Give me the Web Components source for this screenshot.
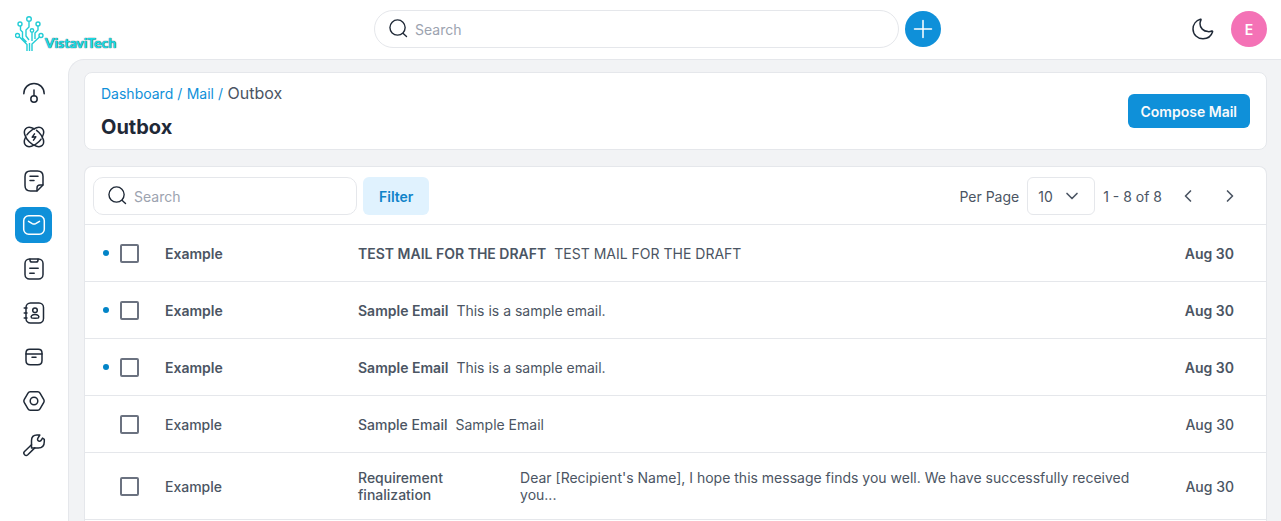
<!DOCTYPE html>
<html lang="en">
<head>
<meta charset="utf-8">
<meta name="viewport" content="width=device-width, initial-scale=1">
<title>Outbox</title>
<style>
  html, body { margin: 0; height: 100%; }
  body {
    --brand: #0f90d9; --line: #e5e7eb; --ink: #1f2937; --text: #4b5563; --soft: #f2f3f5;
    font-family: Inter, "Liberation Sans", sans-serif; font-size: 14px; color: var(--text); background: #fff;
  }
</style>
</head>
<body>
<app-shell>
  <top-bar slot="header"></top-bar>
  <side-nav slot="nav"></side-nav>
  <page-header heading="Outbox">
    <action-button slot="action">Compose Mail</action-button>
  </page-header>
  <ui-card grow>
    <list-toolbar></list-toolbar>
    <mail-list></mail-list>
  </ui-card>
</app-shell>

<script>
const ICONS = {
  search: '<circle cx="11.5" cy="11.5" r="8.3"/><path d="m17.7 17.9 3.6 3.4"/>',
  plus: '<path d="M12 3.500v17M3.500 12h17"/>',
  moon: '<path d="M9.4 2.2C5 3.5 2 7.4 2 12c0 5.5 4.500 9.800 10 9.800 4.500 0 8.300-2.800 9.600-7 .2-.7-.3-1-.9-.8-1.100.5-2.400.7-3.700.6C12.300 14.300 9 10.900 9 6.700c0-1.200.3-2.300.8-3.300.4-.8.300-1.400-.4-1.200Z"/>',
  down: '<path d="m6 9 6 6 6-6"/>',
  left: '<path d="m15 6-6 6 6 6"/>',
  right: '<path d="m9 6 6 6-6 6"/>',
  gauge: '<path d="M1.800 12.800C1.800 6.800 6.300 2.500 12 2.500s10.200 4.300 10.200 10.300"/><circle cx="12" cy="18" r="3.200"/><path d="M12 14.800V9"/>',
  atom: '<ellipse cx="12" cy="12" rx="11.800" ry="6.800" transform="rotate(45 12 12)" pathLength="100" stroke-dasharray="66 4 30"/><ellipse cx="12" cy="12" rx="11.800" ry="6.800" transform="rotate(-45 12 12)" pathLength="100" stroke-dasharray="15 4 46 4 31"/><path d="m12.500 8.800-2.300 3.400 3.600-.4-2.300 3.400"/>',
  note: '<path d="M15 22H8.500C4.800 22 3 20.200 3 16.500V7.500C3 3.800 4.800 2 8.500 2h7C19.200 2 21 3.800 21 7.500V16l-6 6Z"/><path d="M15 21.800V19c0-2.200.8-3 3-3h2.800M8 7.300h8M8 11.500h4"/>',
  mail: '<rect x="1.700" y="2.700" width="20.600" height="18.600" rx="5"/><path d="m6.500 8.300 3.800 2.300c1.100.6 2.300.6 3.400 0l3.800-2.300"/>',
  clip: '<rect x="3" y="2" width="18" height="20" rx="4.500"/><path d="M8 2.200v1c0 1.200.7 1.800 2 1.800h4c1.300 0 2-.6 2-1.800v-1M7.800 11.300h8.400M7.800 16.300h4.400"/>',
  contacts: '<rect x="4" y="2" width="17.500" height="20" rx="4.500"/><path d="M2.200 7H5M2.200 12H5M2.200 17H5"/><circle cx="13" cy="9.300" r="2.300"/><path d="M9.500 16.800c-1.300-1.600 1-3.300 3.500-3.300s4.800 1.700 3.500 3.300c-.8.500-6.200.5-7 0Z"/>',
  archive: '<path d="M4 9v6.500c0 3 1.300 4.300 4.300 4.300h7.400c3 0 4.300-1.300 4.300-4.300V9"/><path d="M4 9V8c0-2.500 1.300-3.700 3.700-3.700h8.600C18.700 4.300 20 5.500 20 8v1ZM10 12.200h4"/>',
  hex: '<path d="M8.200 2.800h7.600c1 0 1.700.4 2.200 1.300l3.800 6.500c.5.900.5 1.900 0 2.800L18 19.900c-.5.900-1.200 1.300-2.200 1.300H8.200c-1 0-1.700-.4-2.200-1.300l-3.800-6.500c-.5-.9-.5-1.900 0-2.800L6 4.100c.5-.9 1.200-1.300 2.200-1.300Z"/><circle cx="12" cy="12" r="3.800"/>',
  wrench: '<path d="m9.500 11.800-7 6.700c-2 2.200 1.100 5.300 3.300 3.300l7-6.900"/><path d="M13 15H9.500V7.500C9.500 4 11.700 2 15 2h2.800l-2 3.300c-.7 1.200 0 2.700 1.500 2.900 1.200.2 1.800-.5 2.300-1.500l.9-1.600 1.800 1.300v2.100c0 4.200-2.200 6.500-6 6.500Z"/>'
};
const icon = (name, size = 24, width = 1.5) =>
  `<svg width="${size}" height="${size}" viewBox="0 0 24 24" fill="none" stroke="currentColor" stroke-width="${width}" stroke-linecap="round" stroke-linejoin="round" aria-hidden="true">${ICONS[name]}</svg>`;

const BASE = `<style>
  * { box-sizing: border-box; } :host { display: block; box-sizing: border-box; } :host([hidden]) { display: none; }
  svg { display: block; flex: none; } a { text-decoration: none; }
  button, input, select { font: inherit; color: inherit; margin: 0; } button { border: 0; padding: 0; background: none; cursor: pointer; }
</style>`;

class BaseElement extends HTMLElement {
  connectedCallback() {
    if (this.shadowRoot) return;
    this.attachShadow({ mode: 'open' }).innerHTML = BASE + this.render();
  }
}

customElements.define('app-shell', class extends BaseElement {
  render() { return `<style>
    :host { display: grid; grid-template: auto minmax(0, 1fr) / 68px minmax(0, 1fr); height: 100vh; overflow: hidden; }
    header { grid-column: 1 / -1; }
    main { display: flex; flex-direction: column; gap: 16px; padding: 12px 14px 0 15px; background: var(--soft);
      border: solid var(--line); border-width: 1px 0 0 1px; border-top-left-radius: 16px; overflow: hidden; }
  </style><header><slot name="header"></slot></header><slot name="nav"></slot><main><slot></slot></main>`; }
});

customElements.define('brand-logo', class extends BaseElement {
  render() { return `<style>
    :host { width: 109px; padding-top: 8px; }
    a { display: flex; align-items: flex-end; height: 38px; color: #23cdd6; }
    span { font: 700 14px/18px Lato, sans-serif; color: #17dce6; text-shadow: 0 0 1px #34606a, 0 0 1px #34606a; white-space: nowrap; }
    svg { margin-right: 1px; }
  </style><a href="#" aria-label="VistaviTech home">
    <svg width="29" height="38" viewBox="0 0 29 38" fill="none" stroke="currentColor" stroke-width="1.400" aria-hidden="true">
      <circle cx="14" cy="5" r="2.300"/><circle cx="5" cy="10" r="2"/><circle cx="23" cy="10" r="2"/><circle cx="17" cy="16.500" r="1.700"/><circle cx="2.500" cy="21.500" r="2"/><circle cx="26" cy="21.500" r="2"/>
      <path d="M14 7.500V13l-3 3v6l3 4M5.500 12v4l2 2v6l4 4M23 12v4l-3 3v6M17 18.500V27M4.500 23l7.500 7.500V37M24.500 23 17 30v7M14.500 29v8"/>
    </svg><span>VistaviTech</span></a>`; }
});

customElements.define('search-field', class extends BaseElement {
  render() { return `<style>
    label { display: flex; align-items: center; gap: 6px; height: 38px; padding: 0 12px; background: #fff;
      border: 1px solid var(--line); border-radius: var(--field-radius, 10px); color: var(--ink); }
    svg { margin-bottom: 2px; }
    input { flex: 1; min-width: 0; border: 0; outline: 0; padding: 0; background: none; }
    input::placeholder { color: #9ca3af; opacity: 1; }
  </style><label>${icon('search', 22)}<input type="search" placeholder="Search" aria-label="Search"></label>`; }
});

customElements.define('top-bar', class extends BaseElement {
  render() { return `<style>
    :host { display: flex; align-items: center; justify-content: space-between; gap: 16px; padding: 6px 14px 7px 15px; background: #fff; }
    .find { display: flex; align-items: center; gap: 6px; flex: 0 1 567px; min-width: 0; }
    search-field { flex: 1; min-width: 0; --field-radius: 19px; }
    .add, .avatar { display: grid; place-items: center; width: 36px; height: 36px; border-radius: 50%; background: var(--brand); color: #fff; }
    .avatar { background: #f472b6; font-weight: 600; }
    .user { display: flex; align-items: center; gap: 16px; color: var(--ink); }
  </style><brand-logo></brand-logo>
  <div class="find"><search-field></search-field><button class="add" aria-label="Add">${icon('plus')}</button></div>
  <div class="user"><button aria-label="Dark mode">${icon('moon')}</button><button class="avatar" aria-label="Account">E</button></div>`; }
});

customElements.define('side-nav', class extends BaseElement {
  render() {
    const items = [['gauge', 'Dashboard'], ['atom', 'Leads'], ['note', 'Notes'], ['mail', 'Mail'], ['clip', 'Activities'], ['contacts', 'Contacts'], ['archive', 'Products'], ['hex', 'Settings'], ['wrench', 'Configuration']];
    return `<style>
    nav { display: flex; flex-direction: column; gap: 8px; padding: 16px 0 0 15px; }
    a { display: grid; place-items: center; width: 37px; height: 36px; border-radius: 8px; color: var(--ink); }
    a[aria-current] { background: var(--brand); color: #fff; }
  </style><nav aria-label="Main">${items.map(([i, t]) => `<a href="#" aria-label="${t}"${i === 'mail' ? ' aria-current="page"' : ''}>${icon(i)}</a>`).join('')}</nav>`; }
});

customElements.define('ui-card', class extends BaseElement {
  render() { return `<style>
    :host { background: #fff; border: 1px solid var(--line); border-radius: 8px; flex: none; }
    :host([grow]) { flex: 1 0 auto; border-bottom: 0; border-radius: 8px 8px 0 0; }
  </style><slot></slot>`; }
});

customElements.define('action-button', class extends BaseElement {
  render() { return `<style>
    :host { flex: none; }
    button { display: block; height: var(--button-height, 34px); padding: 0 var(--button-pad, 13px); border-radius: 6px; font-weight: 600;
      background: var(--button-bg, var(--brand)); color: var(--button-ink, #f9fafb); white-space: nowrap; }
  </style><button type="button"><slot></slot></button>`; }
});

customElements.define('page-header', class extends BaseElement {
  render() { return `<style>
    .row { display: flex; align-items: center; justify-content: space-between; gap: 16px; padding: 8px 16px; }
    nav { font-size: 16px; line-height: 24px; } a { font-size: 14px; line-height: 20px; color: var(--brand); }
    h1 { margin: 8px 0 0; font-size: 20px; line-height: 28px; font-weight: 700; color: var(--ink); }
  </style><ui-card><div class="row"><div>
    <nav aria-label="Breadcrumb"><a href="#">Dashboard /</a> <a href="#">Mail /</a> <span>Outbox</span></nav>
    <h1>${this.getAttribute('heading')}</h1></div><slot name="action"></slot></div></ui-card>`; }
});

customElements.define('list-toolbar', class extends BaseElement {
  render() { return `<style>
    :host { display: flex; align-items: center; gap: 6px; padding: 10px 18px 9px 8px; border-bottom: 1px solid var(--line); }
    search-field { flex: 0 1 264px; min-width: 0; }
    action-button { --button-bg: #e0f2fe; --button-ink: #0f83c9; --button-height: 38px; --button-pad: 16px; }
    .pager { display: flex; align-items: center; gap: 8px; margin-left: auto; white-space: nowrap; }
    .pick { display: grid; align-items: center; }
    .pick > * { grid-area: 1 / 1; }
    .pick svg { justify-self: end; margin-right: 13px; pointer-events: none; }
    select { appearance: none; width: 68px; height: 38px; padding: 0 10px; border: 1px solid var(--line); border-radius: 6px; background: #fff; }
    .step { display: flex; gap: 6px; }
    .step button { display: grid; place-items: center; width: 36px; height: 36px; }
  </style><search-field></search-field><action-button>Filter</action-button>
  <div class="pager"><label for="size">Per Page</label>
    <div class="pick"><select id="size"><option>10</option><option>20</option><option>50</option></select>${icon('down', 20, 2)}</div>
    <span>1 - 8 of 8</span>
    <div class="step"><button aria-label="Previous page">${icon('left', 20, 2)}</button><button aria-label="Next page">${icon('right', 20, 2)}</button></div>
  </div>`; }
});

customElements.define('mail-list', class extends BaseElement {
  render() {
    const mails = [
      [true, 'TEST MAIL FOR THE DRAFT', 'TEST MAIL FOR THE DRAFT'],
      [true, 'Sample Email', 'This is a sample email.'],
      [true, 'Sample Email', 'This is a sample email.'],
      [false, 'Sample Email', 'Sample Email'],
      [false, 'Requirement finalization', "Dear [Recipient's Name], I hope this message finds you well. We have successfully received you..."]
    ];
    return `<style>
    table { width: 100%; border-spacing: 0; table-layout: fixed; line-height: 17px; }
    td { padding: 16px 0; border-bottom: 1px solid var(--line); vertical-align: middle; font-weight: 500; }
    .unread td { font-weight: 600; }
    .mark { width: 80px; } .from { width: 193px; } .date { width: 128px; padding-right: 32px; text-align: right; }
    .check { display: flex; align-items: center; gap: 11px; height: 24px; padding-left: 18px; }
    .dot { width: 6px; height: 6px; border-radius: 50%; } .unread .dot { background: #0284c7; }
    input { appearance: none; width: 19px; height: 19px; border: 2px solid #6b7280; border-radius: 2px; background: #fff; }
    .mail { display: flex; gap: 8px; }
    .mail span { font-weight: 400; }
  </style><table aria-label="Outbox mails"><tbody>${mails.map(([unread, subject, preview]) => `
    <tr class="${unread ? 'unread' : ''}">
      <td class="mark"><div class="check"><i class="dot"></i><input type="checkbox" aria-label="Select ${subject}"></div></td>
      <td class="from">Example</td>
      <td><div class="mail"><div>${subject}</div><span>${preview}</span></div></td>
      <td class="date">Aug 30</td>
    </tr>`).join('')}</tbody></table>`; }
});
</script>
</body>
</html>
